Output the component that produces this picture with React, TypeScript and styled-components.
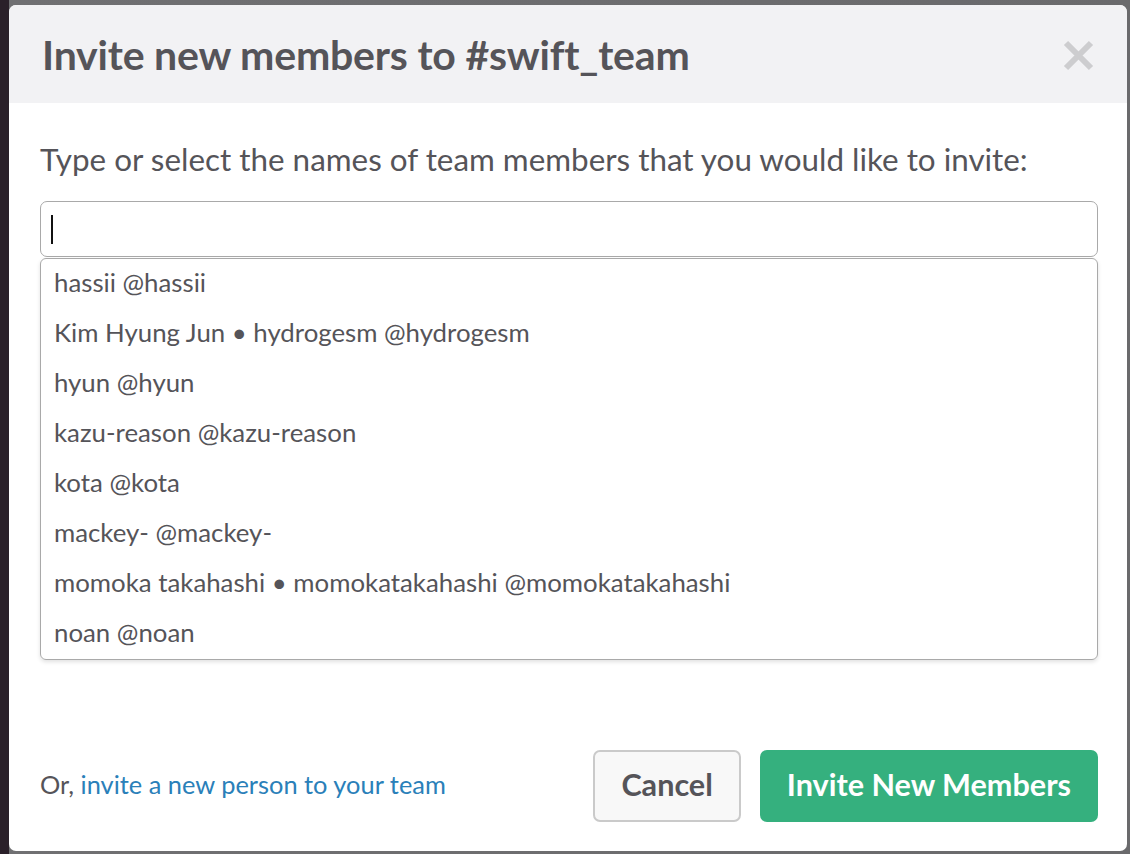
import React from "react";
import styled, { createGlobalStyle } from "styled-components";

const Global = createGlobalStyle`
  html, body { margin: 0; padding: 0; }
  body {
    width: 1130px;
    height: 854px;
    overflow: hidden;
    font-family: Lato, "Open Sans", sans-serif;
    background: #6e6e70;
  }
`;

const Page = styled.div`
  width: 1130px;
  height: 854px;
  box-sizing: border-box;
  padding: 5px 3px 3px 9px;
  background: linear-gradient(to right, #2a2029 0, #2a2029 9px, #707072 9px, #6a6a6c 100%);
  display: flex;
`;

const Modal = styled.div`
  flex: 1;
  background: #fff;
  border-radius: 7px;
  overflow: hidden;
  display: flex;
  flex-direction: column;
  color: #555459;
`;

const Header = styled.div`
  height: 98px;
  background: #f2f2f4;
  display: flex;
  align-items: center;
  justify-content: space-between;
  padding: 0 33px 0 33px;
  box-sizing: border-box;
`;

const Title = styled.h1`
  margin: 0;
  font-size: 41px;
  font-weight: 700;
  letter-spacing: -0.2px;
  color: #555459;
`;

const Close = styled.button`
  border: 0;
  background: none;
  padding: 0;
  width: 31px;
  height: 31px;
  display: flex;
  cursor: pointer;
  margin-top: 2px;
`;

const Body = styled.div`
  flex: 1;
  padding: 36px 29px 29px 31px;
  display: flex;
  flex-direction: column;
`;

const Prompt = styled.p`
  margin: 0 0 22px;
  font-size: 31.4px;
  line-height: 40px;
  color: #555459;
`;

const InputBox = styled.div`
  height: 56px;
  box-sizing: border-box;
  border: 1.5px solid #a9a9a9;
  border-radius: 7px;
  display: flex;
  align-items: center;
  padding-left: 10px;
`;

const Caret = styled.span`
  width: 2px;
  height: 29px;
  background: #111;
`;

const List = styled.ul`
  list-style: none;
  margin: 1px 0 0;
  padding: 0;
  border: 1.5px solid #a9a9a9;
  border-radius: 6px;
  box-shadow: 0 2px 4px rgba(0, 0, 0, 0.12);
`;

const Item = styled.li`
  height: 50px;
  box-sizing: border-box;
  display: flex;
  align-items: center;
  padding: 0 0 4px 13px;
  font-size: 25.8px;
  color: #555459;
`;

const Footer = styled.div`
  margin-top: auto;
  display: flex;
  align-items: center;
  justify-content: space-between;
`;

const Note = styled.div`
  font-size: 25.4px;
  color: #555459;
  margin-top: -4px;
`;

const Link = styled.a`
  color: #2a80b9;
  text-decoration: none;
`;

const Buttons = styled.div`
  display: flex;
  gap: 19px;
`;

const Button = styled.button<{ $primary?: boolean }>`
  height: 72px;
  box-sizing: border-box;
  border-radius: 7px;
  font-family: Lato, "Open Sans", sans-serif;
  font-size: 30.6px;
  font-weight: 700;
  padding: 0 ${(p) => (p.$primary ? "27px" : "26px")} 4px;
  border: ${(p) => (p.$primary ? "none" : "2px solid #cacaca")};
  background: ${(p) => (p.$primary ? "#35b07e" : "#f8f8f8")};
  color: ${(p) => (p.$primary ? "#fff" : "#555459")};
  cursor: pointer;
`;

const members = [
  "hassii @hassii",
  "Kim Hyung Jun \u2022 hydrogesm @hydrogesm",
  "hyun @hyun",
  "kazu-reason @kazu-reason",
  "kota @kota",
  "mackey- @mackey-",
  "momoka takahashi \u2022 momokatakahashi @momokatakahashi",
  "noan @noan",
];

export default function App() {
  return (
    <>
      <Global />
      <Page>
        <Modal>
          <Header>
            <Title>Invite new members to #swift_team</Title>
            <Close aria-label="Close">
              <svg width="31" height="31" viewBox="0 0 31 31">
                <path d="M3 3 L28 28 M28 3 L3 28" stroke="#cdcdcf" strokeWidth="6" />
              </svg>
            </Close>
          </Header>
          <Body>
            <Prompt>Type or select the names of team members that you would like to invite:</Prompt>
            <InputBox>
              <Caret />
            </InputBox>
            <List>
              {members.map((m) => (
                <Item key={m}>{m}</Item>
              ))}
            </List>
            <Footer>
              <Note>
                Or, <Link href="#">invite a new person to your team</Link>
              </Note>
              <Buttons>
                <Button>Cancel</Button>
                <Button $primary>Invite New Members</Button>
              </Buttons>
            </Footer>
          </Body>
        </Modal>
      </Page>
    </>
  );
}
